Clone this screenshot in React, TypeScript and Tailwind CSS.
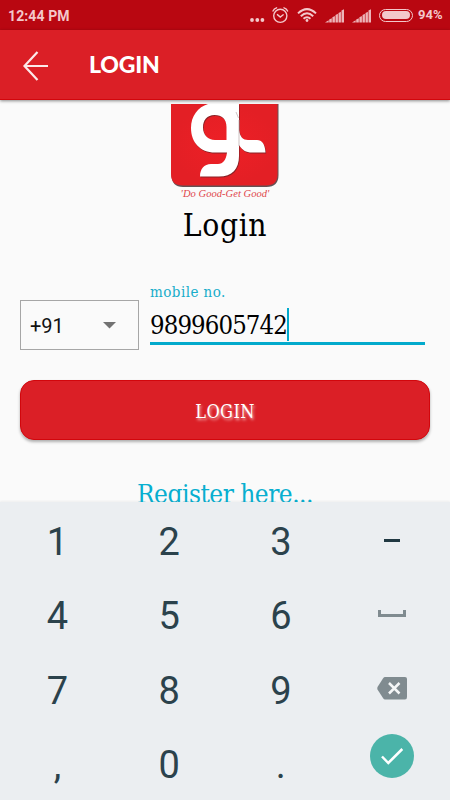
import type { ReactNode } from 'react';

const SERIF = "font-['DejaVu_Serif_Condensed','DejaVu_Serif',serif] [font-stretch:condensed]";

function SignalIcon() {
    return (
        <svg width="20" height="14" viewBox="0 0 20 14" fill="currentColor" fillOpacity="0.9">
            <path d="M0 13.5 L3.7 11.3 V13.5 Z" />
            <path d="M4.2 10.5 L6.8 9.2 V13.5 H4.2 Z" />
            <path d="M7.4 8.3 L9.9 7.1 V13.5 H7.4 Z" />
            <path d="M10.5 6 L12.9 4.8 V13.5 H10.5 Z" />
            <path d="M13.5 4 L15.9 2.8 V13.5 H13.5 Z" />
            <path d="M16.5 1.5 L19 0.3 V13.5 H16.5 Z" />
        </svg>
    );
}

function StatusBar() {
    return (
        <div className="flex h-[30px] shrink-0 items-center bg-[#b90711] pl-2 font-[Roboto,sans-serif] text-[#f3c8cb]">
            <span className="w-[242px] shrink-0 text-[14px] font-bold leading-[30px] tracking-[0.1px] pt-[1px]">12:44 PM</span>
            <div className="flex shrink-0 items-center">
                <svg width="16" height="14" viewBox="0 0 16 14" fill="currentColor">
                    <circle cx="2" cy="12" r="1.9" />
                    <circle cx="7.3" cy="12" r="1.9" />
                    <circle cx="12.4" cy="12" r="1.9" />
                </svg>
                <svg className="ml-[6px]" width="17" height="18" viewBox="0 0 17 18" fill="none" stroke="currentColor" strokeWidth="1.4" strokeLinecap="round">
                    <circle cx="8.3" cy="9.8" r="6.6" />
                    <path d="M5.4 8.6 L8.3 11 L11.2 8.8" />
                    <path d="M1 5 Q2 2.6 4.6 1.8 M15.6 5 Q14.6 2.6 12 1.8" />
                </svg>
                <svg className="ml-[8px]" width="20" height="16" viewBox="0 0 20 16" fill="none" stroke="currentColor" strokeWidth="2">
                    <path d="M1 6.4 Q10 -2.2 19 6.4" />
                    <path d="M3.8 9.2 Q10 3.4 16.2 9.2" />
                    <path d="M6.5 11.7 Q10 8.7 13.5 11.7" />
                    <circle cx="10" cy="13.5" r="1.4" fill="currentColor" stroke="none" />
                </svg>
                <div className="ml-[8px] mt-[1px]"><SignalIcon /></div>
                <div className="ml-[7px] mt-[1px]"><SignalIcon /></div>
                <div className="ml-[7px] flex h-[13px] w-[34px] items-center justify-center rounded-full border-[1.5px] border-current">
                    <div className="h-[8px] w-[28px] rounded-full bg-[#f3c8cb]" />
                </div>
                <span className="ml-[5px] text-[13px] font-bold leading-[28px]">94%</span>
            </div>
        </div>
    );
}

function AppBar() {
    return (
        <header className="z-10 flex h-[70px] shrink-0 items-center border-b border-[#d2060c] bg-[#db1f26] pl-[22px] text-white shadow-[0_1px_3px_rgba(0,0,0,0.45)]">
            <svg width="28" height="32" viewBox="0 0 28 32" fill="none" stroke="#fff" strokeOpacity="0.9" strokeWidth="2.2">
                <path d="M15.5 3 L2.5 17 L15.5 31 M2 17 H26" />
            </svg>
            <h1 className="ml-[39px] font-[Lato,sans-serif] text-[23px] font-black leading-none tracking-[-0.2px]">LOGIN</h1>
        </header>
    );
}

const MARK =
    'M208 104 H239 V130 C240 137 243 140 248 140 H257 C262 140 265 144 265.5 152.5 H252 C246 152.5 242 150 239 145 V156 C239 169 232 176.5 219 176.5 H200 C200 169 204 164 211 164 H218 C223 164 226 160 227 152.5 H215 C200 152.5 191 142 191 128 C191 116 198 107 208 104 Z M214.5 115 C207 115 203 120 203 127.5 C203 135 208 140 215 140 H226.500 V127 C226.500 119 222 115 214.5 115 Z';

function Logo() {
    return (
        <svg width="110" height="84" viewBox="170 104 110 84">
            <defs>
                <radialGradient id="logoFill">
                    <stop offset="0" stopColor="#ee2026" />
                    <stop offset="1" stopColor="#e31f25" />
                </radialGradient>
            </defs>
            <path d="M171.5 104 H278.5 V175 Q278.5 187 266.5 187 H183 Q171.5 187 171.5 175 Z" fill="#655154" />
            <path d="M171 104 H277.5 V174 Q277.5 185.5 266 185.5 H183 Q171 185.5 171 174 Z" fill="url(#logoFill)" />
            <path transform="translate(0.7 1)" fill="#8a2226" fillRule="evenodd" d={MARK} />
            <path fill="#fff" fillRule="evenodd" d={MARK} />
            <path d="M236 112 L238.500 118 M239 120 V146" fill="none" stroke="#b9a9ab" strokeWidth="0.7" />
        </svg>
    );
}

function LoginForm() {
    return (
        <main className="flex h-[402px] shrink-0 flex-col overflow-hidden bg-[#fafafa] px-5 pt-1">
            <div className="flex flex-col items-center">
                <Logo />
                <p className="h-[12px] whitespace-nowrap font-['Liberation_Serif',serif] text-[10.5px] italic leading-[12px] tracking-[0.05px] text-[#e0464b]">'Do Good-Get Good'</p>
                <h2 className={`${SERIF} h-[48px] pt-px text-[31.5px] leading-[48px] tracking-[0.6px] text-black`}>Login</h2>
            </div>

            <div className="mt-[34px] flex h-[68px] gap-[11px]">
                <div className="mt-[18px] flex h-[50px] w-[119px] items-center border border-[#a6a6a6] pl-[9px]">
                    <span className="w-[73px] pt-px font-[Roboto,sans-serif] text-[20px] text-[#111]">+91</span>
                    <svg width="13" height="7" viewBox="0 0 13 7"><path d="M0 0 H13 L6.500 6.500 Z" fill="#727272" /></svg>
                </div>
                <div className="w-[275px]">
                    <label className={`${SERIF} block h-[25px] text-[15px] leading-[20px] tracking-[0.45px] text-[#17adca]`}>mobile no.</label>
                    <div className="flex h-[38px] items-center border-b-[3px] border-[#03aacc]">
                        <span className={`${SERIF} pt-[2px] text-[25.5px] leading-[33px] tracking-[-0.9px] text-black`}>9899605742</span>
                        <span className="h-[33px] w-[2px] bg-[#03aacc]" />
                    </div>
                </div>
            </div>

            <button className={`${SERIF} mt-[30px] h-[60px] w-full shrink-0 rounded-[14px] border border-[#d2060c] bg-[#db1f26] pt-[2px] text-[18px] tracking-[0.4px] text-white shadow-[0_2px_3px_rgba(0,0,0,0.3)] [text-shadow:1px_2px_3px_rgba(255,255,255,0.7)]`}>LOGIN</button>
            <p className={`${SERIF} mt-[36px] whitespace-nowrap text-center text-[26px] leading-[36px] tracking-[-0.5px] text-[#08afd0]`}>Register here...</p>
        </main>
    );
}

function Key({ children }: { children: ReactNode }) {
    return <button className="flex items-center justify-center">{children}</button>;
}

function Keyboard() {
    return (
        <div className="grid h-[298px] grid-cols-[repeat(3,111.75px)_110px] grid-rows-[repeat(4,74.5px)] bg-[#ebeef1] pl-[1.5px] pt-[2.5px] font-[Roboto,sans-serif] text-[38px] leading-none text-[#2b424c] shadow-[0_-1px_2px_rgba(0,0,0,0.05)]">
            <Key>1</Key>
            <Key>2</Key>
            <Key>3</Key>
            <Key><span className="mb-[2px] h-[3px] w-[16px] bg-[#203842]" /></Key>
            <Key>4</Key>
            <Key>5</Key>
            <Key>6</Key>
            <Key><span className="mb-[5px] h-[7px] w-[28px] border-x-[3px] border-b-[3px] border-[#808b90]" /></Key>
            <Key>7</Key>
            <Key>8</Key>
            <Key>9</Key>
            <Key>
                <svg className="mb-[5px]" width="30" height="23" viewBox="0 0 30 23">
                    <path d="M8 0 H28 Q30 0 30 2 V20 Q30 22.500 28 22.500 H8 Q7 22.500 6.300 21.500 L0.500 12.500 Q0 11.300 0.500 10.100 L6.300 1 Q7 0 8 0 Z" fill="#808b90" />
                    <path d="M12 6 L22.500 16.500 M22.500 6 L12 16.500" stroke="#f4f6f7" strokeWidth="2.500" />
                </svg>
            </Key>
            <Key>,</Key>
            <Key>0</Key>
            <Key>.</Key>
            <Key>
                <span className="mb-[18px] flex size-[44px] items-center justify-center rounded-full bg-[#4bb4a9]">
                    <svg width="24" height="20" viewBox="0 0 24 20" fill="none" stroke="#fff" strokeWidth="2.500">
                        <path d="M2 10.500 L8.300 17 L22.300 3" />
                    </svg>
                </span>
            </Key>
        </div>
    );
}

export default function App() {
    return (
        <div className="flex h-[800px] w-[450px] flex-col overflow-hidden bg-[#fafafa]">
            <StatusBar />
            <AppBar />
            <LoginForm />
            <Keyboard />
        </div>
    );
}
